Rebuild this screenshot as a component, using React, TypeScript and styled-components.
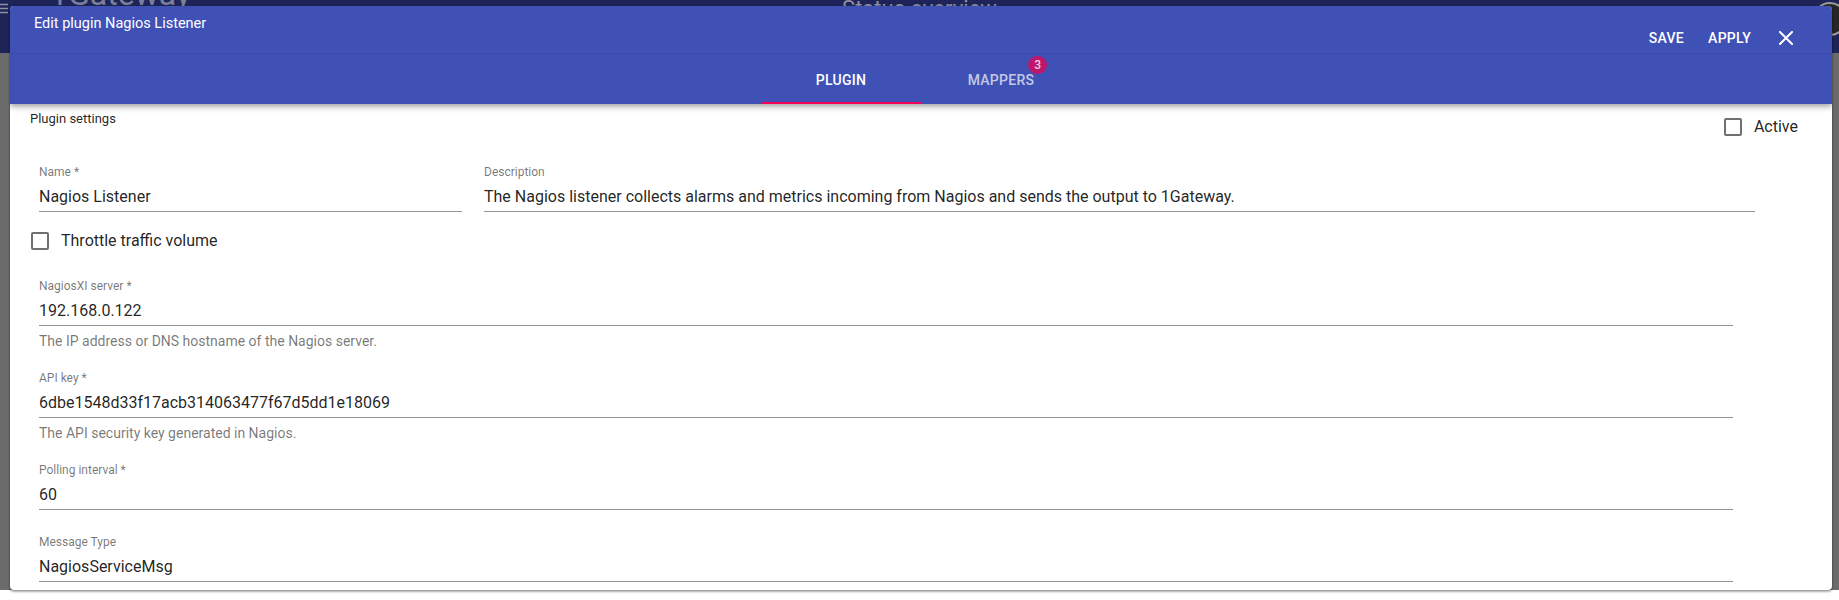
import styled, { createGlobalStyle } from 'styled-components';

const GlobalStyle = createGlobalStyle`
  html, body {
    margin: 0;
    padding: 0;
    background: #fff;
  }
  body {
    font-family: Roboto, 'Liberation Sans', Arial, sans-serif;
    -webkit-font-smoothing: antialiased;
  }
  * {
    box-sizing: border-box;
  }
`;

const Screen = styled.div`
  position: relative;
  width: 1839px;
  height: 600px;
  overflow: hidden;
  background: #fff;
`;

/* page behind the modal, darkened by the backdrop */
const Backdrop = styled.div`
  height: 590px;
  display: flex;
  flex-direction: column;
  background: #6b6b6b;
`;

const AppBar = styled.header`
  height: 53px;
  background: #1e2457;
  display: grid;
  grid-template-columns: 1fr auto 1fr;
  align-items: start;
  overflow: hidden;
`;

const AppBarLeft = styled.div`
  display: flex;
  align-items: flex-start;
`;

const MenuGlyph = styled.svg`
  margin-left: -12px;
  margin-top: 2px;
`;

const Brand = styled.div`
  margin-left: 42px;
  margin-top: -22px;
  font-size: 32px;
  line-height: 32px;
  color: #7d809b;
`;

const PageTitle = styled.div`
  margin-top: -2px;
  font-size: 22px;
  line-height: 22px;
  color: #8d8f9c;
`;

const Avatar = styled.div`
  justify-self: end;
  margin: 2px -8px 0 0;
  width: 34px;
  height: 34px;
  border-radius: 50%;
  border: 2px solid #9a9a9a;
  background: #262626;
`;

const Dialog = styled.section`
  position: absolute;
  left: 10px;
  top: 6px;
  width: 1822px;
  height: 584px;
  background: #fff;
  border-radius: 4px;
  overflow: hidden;
  box-shadow: 0 1px 3px rgba(0, 0, 0, 0.4), 0 2px 2px rgba(0, 0, 0, 0.14);
  display: flex;
  flex-direction: column;
`;

const DialogBar = styled.div`
  position: relative;
  z-index: 1;
  background: #3f51b5;
  color: #fff;
  box-shadow: 0 2px 4px -1px rgba(0, 0, 0, 0.2), 0 4px 5px 0 rgba(0, 0, 0, 0.14),
    0 1px 10px 0 rgba(0, 0, 0, 0.12);
`;

const TitleRow = styled.div`
  height: 48px;
  display: flex;
  align-items: flex-start;
  padding: 0 39px 0 24px;
  border-bottom: 1px solid rgba(0, 0, 0, 0.08);
`;

const Title = styled.h2`
  margin: 9px 0 0;
  font-size: 14.5px;
  line-height: 18px;
  font-weight: 400;
`;

const Actions = styled.div`
  margin-left: auto;
  margin-top: 21px;
  height: 22px;
  display: flex;
  align-items: center;
`;

const ActionButton = styled.button<{ $gap: number }>`
  margin-right: ${({ $gap }) => $gap}px;
  padding: 0;
  border: 0;
  background: none;
  color: #fff;
  font-family: Roboto, 'Liberation Sans', Arial, sans-serif;
  font-size: 14px;
  font-weight: 500;
  line-height: 16px;
  letter-spacing: 0.02em;
  text-transform: uppercase;
  cursor: pointer;
`;

const CloseButton = styled.button`
  display: flex;
  padding: 0;
  border: 0;
  background: none;
  cursor: pointer;
`;

const TabsRow = styled.div`
  height: 50px;
  display: flex;
  justify-content: center;
`;

const Tab = styled.div<{ $active?: boolean }>`
  position: relative;
  width: 160px;
  height: 50px;
  padding-top: 2px;
  display: flex;
  align-items: center;
  justify-content: center;
  font-size: 14px;
  font-weight: 500;
  line-height: 16px;
  letter-spacing: 0.02em;
  text-transform: uppercase;
  color: ${({ $active }) => ($active ? '#fff' : 'rgba(255, 255, 255, 0.7)')};

  &::after {
    content: '';
    position: absolute;
    left: 0;
    right: 0;
    bottom: 0;
    height: 2px;
    background: ${({ $active }) => ($active ? '#f50057' : 'transparent')};
  }
`;

const TabLabel = styled.span`
  position: relative;
`;

const Badge = styled.span`
  position: absolute;
  top: -16px;
  right: -13px;
  width: 19px;
  height: 18px;
  border-radius: 10px;
  background: #bd176c;
  color: #f4cfe1;
  font-size: 12px;
  font-weight: 500;
  line-height: 18px;
  text-align: center;
`;

const Content = styled.div`
  flex: 1;
  padding: 0 20px 8px;
`;

const SettingsHeader = styled.div`
  height: 36px;
  display: flex;
  justify-content: space-between;
  align-items: flex-start;
`;

const SectionTitle = styled.div`
  margin-top: 7px;
  font-size: 13px;
  line-height: 16px;
  color: rgba(0, 0, 0, 0.87);
`;

const CheckRow = styled.label<{ $top: number; $left?: number; $right?: number }>`
  margin: ${({ $top, $left = 0, $right = 0 }) => `${$top}px ${$right}px 0 ${$left}px`};
  display: flex;
  align-items: center;
  gap: 12px;
  font-size: 16px;
  line-height: 18px;
  color: rgba(0, 0, 0, 0.87);
`;

const CheckBox = styled.span`
  width: 18px;
  height: 18px;
  border: 2px solid rgba(0, 0, 0, 0.56);
  border-radius: 2px;
`;

const FieldRow = styled.div`
  margin-top: 25px;
  padding-left: 9px;
  display: flex;
  gap: 22px;
`;

const Field = styled.div<{ $width: number; $top?: number }>`
  width: ${({ $width }) => $width}px;
  margin: ${({ $top = 0 }) => `${$top}px 0 0 9px`};

  ${FieldRow} & {
    margin: 0;
  }
`;

const Label = styled.div`
  font-size: 12px;
  line-height: 14px;
  color: rgba(0, 0, 0, 0.54);
`;

const Value = styled.div`
  padding: 8px 0 5px;
  font-size: 16px;
  line-height: 19px;
  color: rgba(0, 0, 0, 0.87);
  white-space: nowrap;
  border-bottom: 1px solid rgba(0, 0, 0, 0.42);
`;

const Helper = styled.div`
  margin-top: 8px;
  font-size: 14px;
  line-height: 14px;
  color: rgba(0, 0, 0, 0.54);
`;

type FieldProps = {
  label: string;
  value: string;
  helper?: string;
  width: number;
  top?: number;
};

const TextField = ({ label, value, helper, width, top }: FieldProps) => (
  <Field $width={width} $top={top}>
    <Label>{label}</Label>
    <Value>{value}</Value>
    {helper && <Helper>{helper}</Helper>}
  </Field>
);

const CloseIcon = () => (
  <svg width="14" height="14" viewBox="0 0 14 14">
    <path d="M1 1 L13 13 M13 1 L1 13" stroke="#fff" strokeWidth="2" strokeLinecap="square" />
  </svg>
);

export default function App() {
  return (
    <>
      <GlobalStyle />
      <Screen>
        <Backdrop>
          <AppBar>
            <AppBarLeft>
              <MenuGlyph width="20" height="12" viewBox="0 0 20 12">
                <path d="M0 2.5 H20 M0 6.5 H20 M0 10.5 H20" stroke="#8e90a4" strokeWidth="1.6" />
              </MenuGlyph>
              <Brand>1Gateway</Brand>
            </AppBarLeft>
            <PageTitle>Status overview</PageTitle>
            <Avatar />
          </AppBar>
        </Backdrop>

        <Dialog>
          <DialogBar>
            <TitleRow>
              <Title>Edit plugin Nagios Listener</Title>
              <Actions>
                <ActionButton $gap={24}>Save</ActionButton>
                <ActionButton $gap={28}>Apply</ActionButton>
                <CloseButton aria-label="close">
                  <CloseIcon />
                </CloseButton>
              </Actions>
            </TitleRow>
            <TabsRow>
              <Tab $active>Plugin</Tab>
              <Tab>
                <TabLabel>
                  Mappers
                  <Badge>3</Badge>
                </TabLabel>
              </Tab>
            </TabsRow>
          </DialogBar>

          <Content>
            <SettingsHeader>
              <SectionTitle>Plugin settings</SectionTitle>
              <CheckRow $top={14} $right={14}>
                <CheckBox />
                Active
              </CheckRow>
            </SettingsHeader>

            <FieldRow>
              <TextField label="Name *" value="Nagios Listener" width={423} />
              <TextField
                label="Description"
                value="The Nagios listener collects alarms and metrics incoming from Nagios and sends the output to 1Gateway."
                width={1271}
              />
            </FieldRow>

            <CheckRow $top={20} $left={1}>
              <CheckBox />
              Throttle traffic volume
            </CheckRow>

            <TextField
              label="NagiosXI server *"
              value="192.168.0.122"
              helper="The IP address or DNS hostname of the Nagios server."
              width={1694}
              top={29}
            />
            <TextField
              label="API key *"
              value="6dbe1548d33f17acb314063477f67d5dd1e18069"
              helper="The API security key generated in Nagios."
              width={1694}
              top={23}
            />
            <TextField label="Polling interval *" value="60" width={1694} top={23} />
            <TextField label="Message Type" value="NagiosServiceMsg" width={1694} top={25} />
          </Content>
        </Dialog>
      </Screen>
    </>
  );
}
